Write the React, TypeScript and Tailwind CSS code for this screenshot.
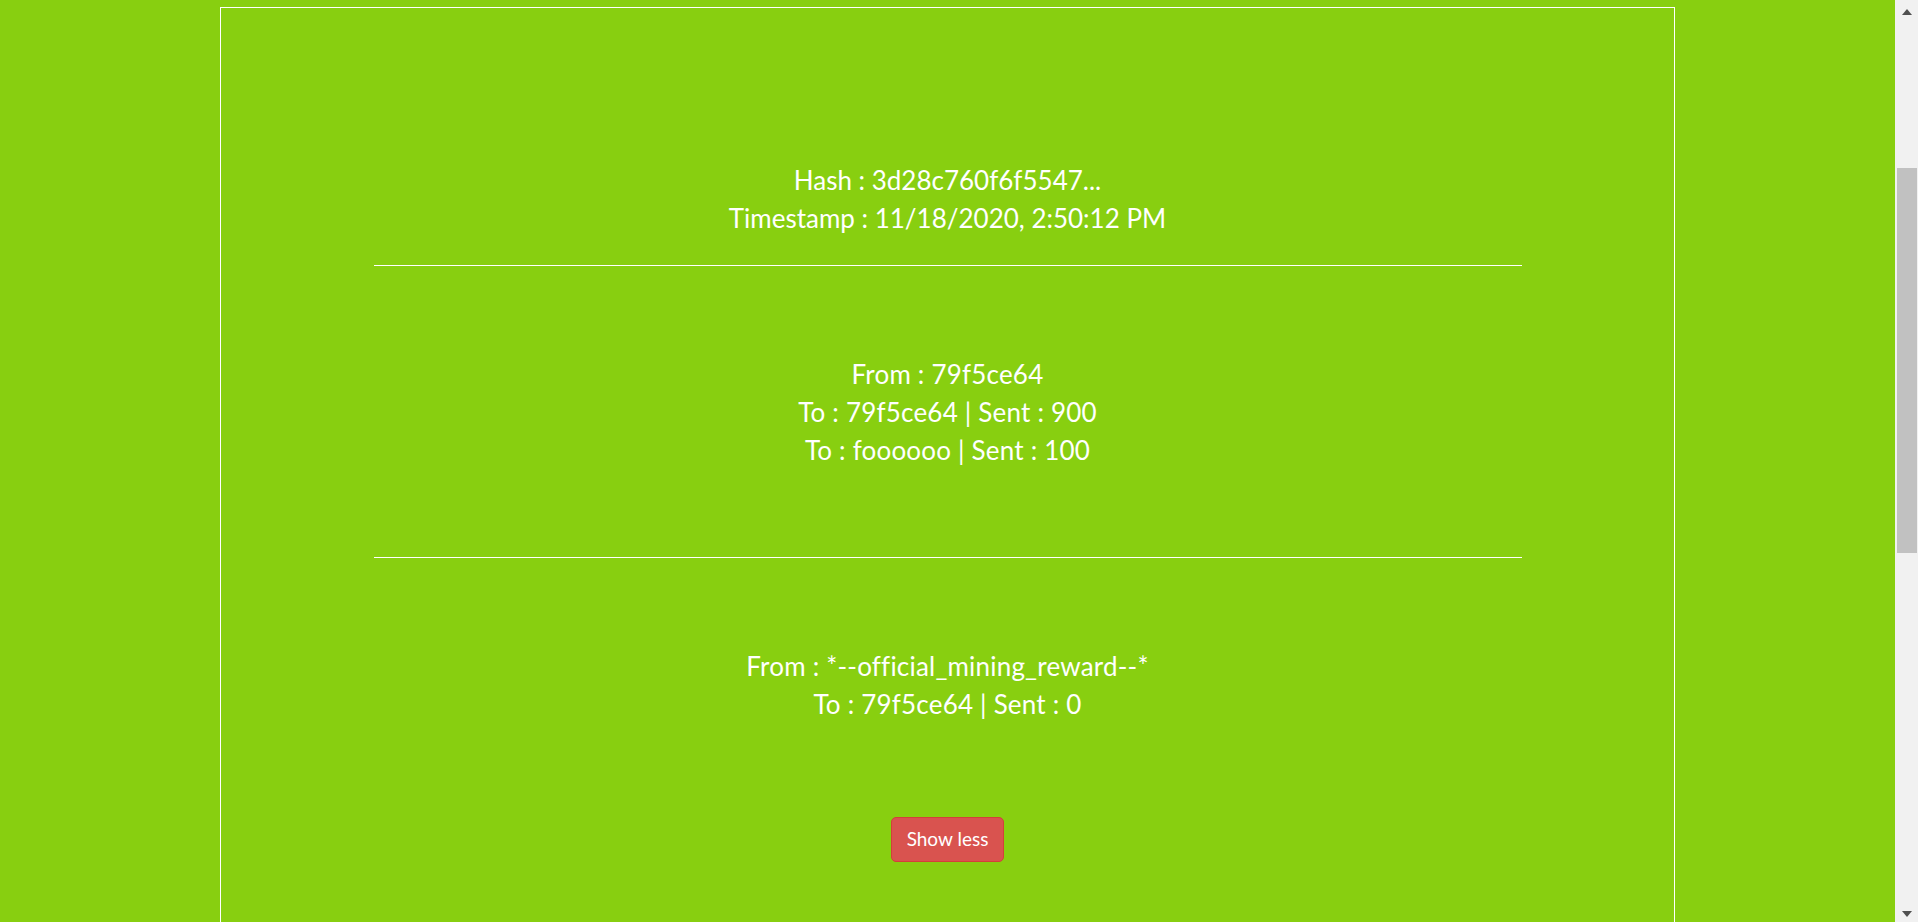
export default function App() {
  const blocks = [
    ["From : 79f5ce64", "To : 79f5ce64 | Sent : 900", "To : foooooo | Sent : 100"],
    ["From : *--official_mining_reward--*", "To : 79f5ce64 | Sent : 0"],
  ];

  return (
    <div className="flex h-[922px] w-full overflow-hidden bg-[#88cf10] font-['Lato','Noto_Sans',sans-serif] text-white">
      {/* Page */}
      <main className="flex flex-1 justify-center pt-[7px]">
        <section className="flex h-[1100px] w-[1455px] flex-col items-center border border-white">
          {/* Block header */}
          <div className="flex flex-col items-center pt-[153px] text-[26px] leading-[38px]">
            <p>Hash : 3d28c760f6f5547...</p>
            <p>Timestamp : 11/18/2020, 2:50:12 PM</p>
          </div>

          {blocks.map((lines, i) => (
            <div key={i} className="flex flex-col items-center">
              <hr className={`${i === 0 ? "mt-[28px]" : "mt-[88px]"} w-[1148px] border-0 border-t border-white`} />
              <div className="flex flex-col items-center pt-[89px] text-[26px] leading-[38px]">
                {lines.map((line) => (
                  <p key={line} className="tracking-[0.2px]">{line}</p>
                ))}
              </div>
            </div>
          ))}

          <button className="mt-[94px] h-[45px] w-[113px] rounded-[5px] border border-[#d43f3a] bg-[#d9534f] text-[19px] text-white">
            Show less
          </button>
        </section>
      </main>

      {/* Scrollbar */}
      <aside className="relative w-[23px] bg-[#f1f1f1]">
        <div className="absolute left-[7px] top-[9px] h-0 w-0 border-x-[5px] border-b-[6px] border-x-transparent border-b-[#505050]" />
        <div className="absolute left-[2px] top-[168px] h-[385px] w-[20px] bg-[#c1c1c1]" />
        <div className="absolute bottom-[5px] left-[7px] h-0 w-0 border-x-[5px] border-t-[6px] border-x-transparent border-t-[#505050]" />
      </aside>
    </div>
  );
}
